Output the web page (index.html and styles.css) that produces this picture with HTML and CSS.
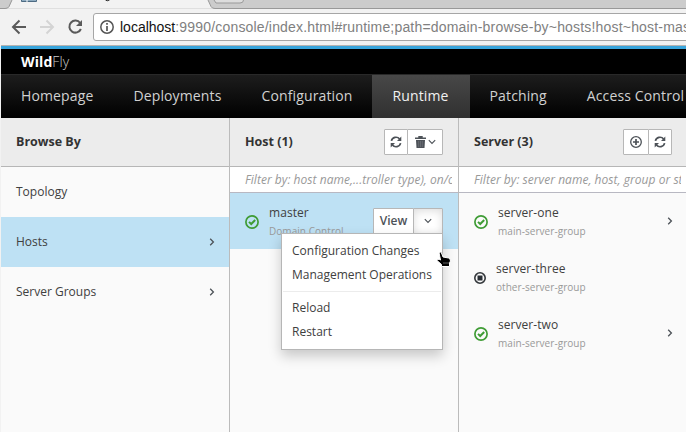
FILE: index.html
```html
<!DOCTYPE html>
<html lang="en">
<head>
<meta charset="utf-8">
<title>WildFly Management</title>
<link rel="stylesheet" href="styles.css">
</head>
<body>
<svg class="defs" width="0" height="0">
  <symbol id="chev" viewBox="0 0 6 8"><path d="M1.2 .8 4.4 4 1.2 7.2" fill="none" stroke="currentColor" stroke-width="1.300"/></symbol>
  <symbol id="down" viewBox="0 0 8 6"><path d="M.8 1.2 4 4.4 7.2 1.2" fill="none" stroke="currentColor" stroke-width="1.1"/></symbol>
  <symbol id="ok" viewBox="0 0 14 14"><circle cx="7" cy="7" r="6.1" fill="none" stroke="currentColor" stroke-width="1.7"/><path d="M4 6.9 6.2 9 10.2 5" fill="none" stroke="currentColor" stroke-width="2"/></symbol>
  <symbol id="sync" viewBox="0 0 12 12"><path d="M1.4 4.9A4.7 4.7 0 0 1 9.6 3M10.6 7.1A4.7 4.7 0 0 1 2.4 9" fill="none" stroke="currentColor" stroke-width="1.7"/><path d="M11.3.6v4.3H7zM.7 11.4V7.1H5z" fill="currentColor"/></symbol>
</svg>
<div class="window">
  <div class="tabs">
    <svg width="686" height="9" viewBox="0 0 686 9">
      <path d="M0 0H12L9 6.5Q8 8 6 8H0Z" fill="#ccc"/>
      <path d="M12 0H208L211 6.5Q212 8.5 214 8.5H0H6Q8.500 8.500 9.500 6.500Z" fill="#f2f2f2"/>
      <path d="M0 8.500H5Q8 8.500 9 6.500L12 0M208 0 211 6.500Q212 8.500 215 8.500H686" fill="none" stroke="#999"/>
      <path d="M214 0 216 3H240Q243.500 3 243.500 0" fill="#ddd" stroke="#999"/>
      <path d="M21.500 0V1.500H36.500V0" fill="#8eabc0" stroke="#4d6b83"/><path d="M27 0V2" stroke="#fff"/>
      <path d="M105.500 0Q107 1.500 109.500 0" fill="none" stroke="#222"/>
    </svg>
  </div>
  <div class="toolbar">
    <svg class="nav-icons" width="84" height="18" viewBox="0 0 84 18">
      <path d="M15 9H2.500M8.500 2.500 2 9 8.500 15.500" fill="none" stroke="#5a5a5a" stroke-width="2"/>
      <path d="M29 9H41.500M35.500 2.500 42 9 35.500 15.500" fill="none" stroke="#d4d4d4" stroke-width="2"/>
      <path d="M69.200 5A6 6 0 1 0 69.900 11" fill="none" stroke="#5a5a5a" stroke-width="2"/><path d="M71 2V8H65Z" fill="#5a5a5a"/>
    </svg>
    <div class="address">
      <svg width="14" height="14" viewBox="0 0 14 14"><circle cx="7" cy="7" r="6.200" fill="none" stroke="#555" stroke-width="1.500"/><path d="M7 6V11M7 3V4.700" stroke="#555" stroke-width="1.700"/></svg>
      <span class="url"><b>localhost</b>:9990/console/index.html#runtime;path=domain-browse-by~hosts!host~host-mas</span>
    </div>
  </div>
  <header class="brand"><b>Wild</b>Fly</header>
  <nav class="menu"><a>Homepage</a><a>Deployments</a><a>Configuration</a><a class="active">Runtime</a><a>Patching</a><a>Access Control</a></nav>
  <main class="finder">
    <section class="column browse">
      <div class="head">Browse By</div>
      <div class="item"><span>Topology</span></div>
      <div class="item selected"><span>Hosts</span><svg class="chev"><use href="#chev"/></svg></div>
      <div class="item"><span>Server Groups</span><svg class="chev"><use href="#chev"/></svg></div>
    </section>
    <section class="column host">
      <div class="head"><span>Host (1)</span>
        <div class="buttons"><button class="sync"><svg width="12" height="12"><use href="#sync"/></svg></button><button class="trash"><svg width="11" height="12" viewBox="0 0 11 12"><path d="M0 1.500H3.300V0H7.700V1.500H11V3H0ZM1 4H10L9.500 12H1.500Z" fill="currentColor"/><path d="M3.700 5V11M5.500 5V11M7.300 5V11" stroke="#80848a" stroke-width=".5"/></svg><svg width="8" height="6"><use href="#down"/></svg></button></div>
      </div>
      <div class="filter"><span>Filter by: host name,...troller type), on/off</span></div>
      <div class="row selected">
        <svg class="status"><use href="#ok"/></svg>
        <div class="text"><div class="name">master</div><div class="sub">Domain Control</div></div>
        <div class="action"><button class="view">View</button><button class="toggle"><svg width="8" height="6"><use href="#down"/></svg></button>
          <div class="dropdown"><a>Configuration Changes</a><a>Management Operations</a><hr><a>Reload</a><a>Restart</a></div>
          <svg class="cursor" width="16" height="17" viewBox="0 0 16 17"><path d="M3 1.500Q4.500.5 5.500 2L7 6 12.500 7Q14.500 7.500 14.500 10L13.500 12V15.500H5.500V13.500L1 9.500Q1 7.500 3.500 8.500L4.500 9Z" fill="#000" stroke="#fff" stroke-width="1"/><path d="M8 11V13M10 11V13M12 11V13" stroke="#888" stroke-width=".7"/></svg>
        </div>
      </div>
    </section>
    <section class="column server">
      <div class="head"><span>Server (3)</span>
        <div class="buttons"><button class="add"><svg width="12" height="12" viewBox="0 0 12 12" fill="none" stroke="currentColor"><circle cx="6" cy="6" r="5.300" stroke-width="1.300"/><path d="M6 3V9M3 6H9" stroke-width="1.700"/></svg></button><button class="sync"><svg width="12" height="12"><use href="#sync"/></svg></button></div>
      </div>
      <div class="filter"><span>Filter by: server name, host, group or status</span></div>
      <div class="row"><svg class="status"><use href="#ok"/></svg><div class="text"><div class="name">server-one</div><div class="sub">main-server-group</div></div><svg class="chev"><use href="#chev"/></svg></div>
      <div class="row"><svg class="stopped" viewBox="0 0 12 12"><circle cx="6" cy="6" r="5.200" fill="none" stroke="#33373b" stroke-width="1.600"/><path d="M3.500 3.500H8.500V8.500H3.500Z" fill="#292e34"/></svg><div class="text"><div class="name">server-three</div><div class="sub">other-server-group</div></div></div>
      <div class="row"><svg class="status"><use href="#ok"/></svg><div class="text"><div class="name">server-two</div><div class="sub">main-server-group</div></div><svg class="chev"><use href="#chev"/></svg></div>
    </section>
  </main>
</div>
</body>
</html>
```
FILE: styles.css
```css
* { box-sizing: border-box; }
body { margin: 0; width: 686px; height: 432px; overflow: hidden; background: #f2f2f2; font: 12px/16px "Open Sans", sans-serif; color: #404040; }
.defs { display: block; position: absolute; }
.window { height: 432px; display: flex; flex-direction: column; padding-left: 1px; }
.tabs { height: 9px; background: #ccc; }
.tabs svg { display: block; margin-left: -1px; }
.toolbar { height: 37px; display: flex; align-items: center; background: #f2f2f2; border-bottom: 1px solid #b6b4b2; padding-left: 10px; }
.nav-icons { flex: none; }
.toolbar .address { flex: 1; min-width: 0; height: 28px; margin: 0 -4px 0 -2px; border: 1px solid #a6a6a6; border-radius: 3px; background: #fff; display: flex; align-items: center; gap: 6px; padding-left: 6px; overflow: hidden; }
.address svg { flex: none; }
.url { font: 14px/20px "Liberation Sans", Arial, sans-serif; letter-spacing: .18px; color: #808080; white-space: nowrap; }
.url b { color: #111; font-weight: 400; letter-spacing: 0; }
.brand { height: 28px; border-top: 3px solid #39a5dc; background: #000; color: #ccc; padding: 5px 20px 0; font-size: 14px; font-weight: 300; letter-spacing: .1px; }
.brand b { color: #fff; font-weight: 700; }
.menu { height: 44px; display: flex; background: linear-gradient(#1d1d1d, #000); border-top: 1px solid #292929; white-space: nowrap; }
.menu a { padding: 0 20px; font-size: 14px; line-height: 41px; letter-spacing: .13px; color: #d1d1d1; }
.menu .active { background: linear-gradient(#484848, #303030); color: #f1f1f1; padding-right: 21px; }
.finder { flex: 1; display: grid; grid-template-columns: 229px 229px 229px; }
.column { background: #fafafa; border-right: 1px solid #bbb; min-width: 0; }
.head { height: 49px; background: #ececec; border-bottom: 1px solid #b6b6b6; display: flex; align-items: center; justify-content: space-between; padding: 0 15px; font-weight: 700; font-size: 12.500px; color: #333; }
.buttons { display: flex; }
button { font: inherit; border: 1px solid #b7b7b7; border-radius: 1px; height: 26px; background: #fff; color: #4d5258; padding: 0; display: flex; align-items: center; justify-content: center; }
button + button { margin-left: -1px; }
.sync { width: 24px; }
.trash { width: 36px; gap: 2px; }
.add { width: 26px; }
.item { height: 50px; display: flex; align-items: center; justify-content: space-between; padding: 0 14px 0 15px; }
.selected { background: #bee1f4; }
.chev { width: 6px; height: 8px; flex: none; color: #4d5258; }
.filter { height: 26px; background: #fff; border-bottom: 1px solid #b8b8c2; padding: 5px 6px 0 15px; color: #999; font-style: italic; letter-spacing: .04px; }
.filter span { display: block; overflow: hidden; white-space: nowrap; }
.row { height: 56px; display: flex; align-items: center; padding: 0 12px 0 15px; }
.status { width: 14px; height: 14px; flex: none; color: #3f9c35; margin: 2px 10px 0 0; }
.stopped { width: 12px; height: 12px; flex: none; margin: 2px 10px 0 0; }
.text { flex: 1; min-width: 0; white-space: nowrap; padding-top: 1px; }
.name { line-height: 18px; letter-spacing: .05px; }
.sub { font-size: 10px; line-height: 16px; padding-top: 1px; color: #999; letter-spacing: .05px; }
.action { display: flex; position: relative; margin-right: 3px; }
.view { width: 41px; font-weight: 600; }
.toggle { width: 30px; box-shadow: inset 0 2px 8px #ddd; }
.dropdown { position: absolute; right: 0; top: 25px; width: 162px; height: 117px; background: #fff; border: 1px solid #b6b6b6; box-shadow: 0 6px 12px #0003; padding: 5px 1px; white-space: nowrap; }
.dropdown a { display: block; height: 24px; line-height: 24px; padding-left: 9px; }
.dropdown hr { margin: 4px 0; border: 0; border-top: 1px solid #ececec; }
.cursor { position: absolute; left: 63px; top: 43px; }
.server .row { padding-right: 14px; }
```
